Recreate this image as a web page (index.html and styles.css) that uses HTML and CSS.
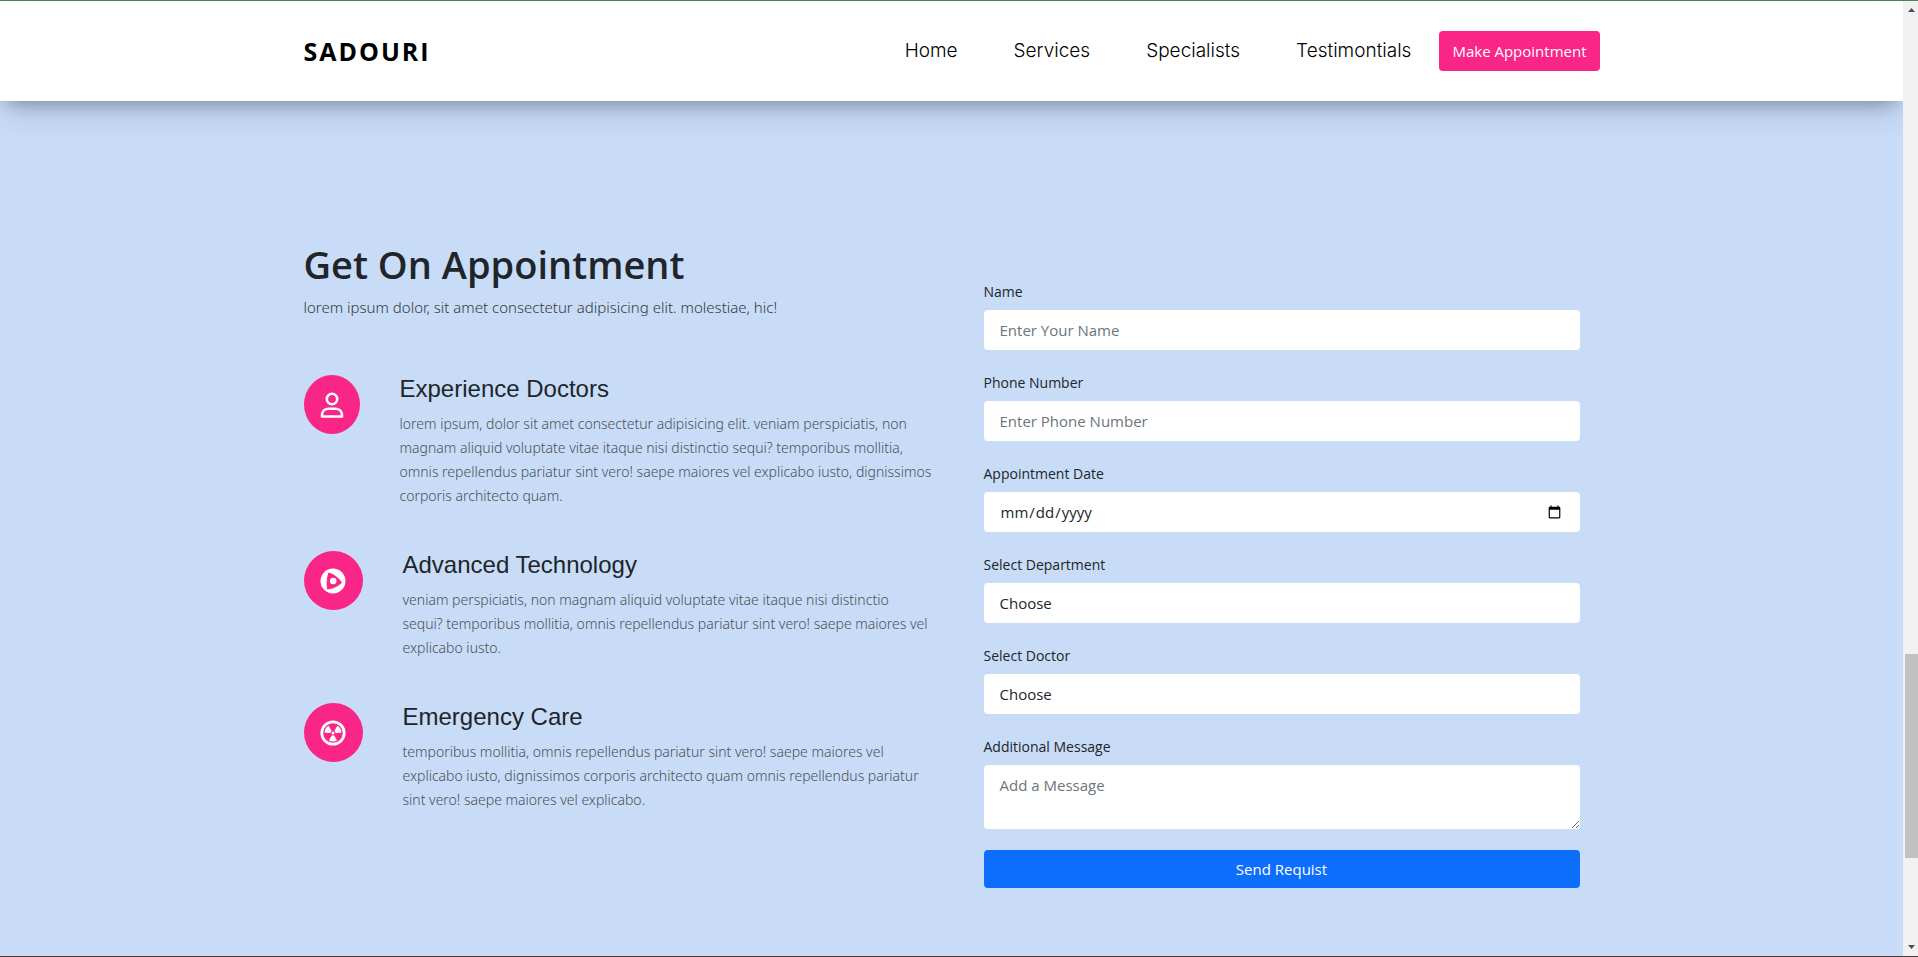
FILE: index.html
```html
<!DOCTYPE html>
<html lang="en">
<head>
<meta charset="utf-8">
<title>Sadouri</title>
<link rel="stylesheet" href="styles.css">
</head>
<body>
<div class="window">
  <div class="page">
    <header class="header">
      <div class="container header-row">
        <a class="brand" href="#">SADOURI</a>
        <nav class="nav">
          <a class="nav-link" href="#">Home</a>
          <a class="nav-link" href="#">Services</a>
          <a class="nav-link" href="#">Specialists</a>
          <a class="nav-link" href="#">Testimontials</a>
          <button class="btn-appointment" type="button">Make Appointment</button>
        </nav>
      </div>
    </header>
    <main class="container appointment">
      <section class="info">
        <h1 class="title">Get On Appointment</h1>
        <p class="subtitle">lorem ipsum dolor, sit amet consectetur adipisicing elit. molestiae, hic!</p>
        <article class="feature">
          <span class="feature-icon feature-icon-narrow">
            <svg class="icon" viewBox="0 0 26 26" fill="none" stroke="#fff" stroke-width="2.600"><circle cx="13" cy="7" r="5.200"/><path d="M3 24.500V23.200C3 19.300 6 16.800 9.600 16.800h6.800c3.600 0 6.600 2.500 6.600 6.400v1.300z" stroke-linejoin="round"/></svg>
          </span>
          <div class="feature-body">
            <h2 class="feature-title">Experience Doctors</h2>
            <p class="feature-text">lorem ipsum, dolor sit amet consectetur adipisicing elit. veniam perspiciatis, non<br>magnam aliquid voluptate vitae itaque nisi distinctio sequi? temporibus mollitia,<br>omnis repellendus pariatur sint vero! saepe maiores vel explicabo iusto, dignissimos<br>corporis architecto quam.</p>
          </div>
        </article>
        <article class="feature">
          <span class="feature-icon">
            <svg class="icon" viewBox="0 0 26 26"><circle cx="13" cy="13" r="12.500" fill="#fff"/><path d="M8.800 5C7.300 9.500 6.600 15.500 7.500 21c5.500-.7 10.500-2.800 14-6.500C18.500 10 14 6.500 8.800 5z" fill="#f92587" stroke="#f92587" stroke-width="1" stroke-linejoin="round"/><circle cx="13.200" cy="13" r="3.300" fill="#fff"/></svg>
          </span>
          <div class="feature-body">
            <h2 class="feature-title">Advanced Technology</h2>
            <p class="feature-text">veniam perspiciatis, non magnam aliquid voluptate vitae itaque nisi distinctio<br>sequi? temporibus mollitia, omnis repellendus pariatur sint vero! saepe maiores vel<br>explicabo iusto.</p>
          </div>
        </article>
        <article class="feature">
          <span class="feature-icon">
            <svg class="icon" viewBox="0 0 26 26"><circle cx="13" cy="13" r="11.200" fill="none" stroke="#fff" stroke-width="2.800"/><g fill="#fff"><circle cx="13" cy="13" r="1.500"/><path d="M11.700 15.400h2.600l2.700 5c-2.400 1.500-5.600 1.500-8 0z"/><path d="M11.700 15.400h2.600l2.700 5c-2.400 1.500-5.600 1.500-8 0z" transform="rotate(120 13 13)"/><path d="M11.700 15.400h2.600l2.700 5c-2.400 1.500-5.600 1.500-8 0z" transform="rotate(240 13 13)"/></g></svg>
          </span>
          <div class="feature-body">
            <h2 class="feature-title">Emergency Care</h2>
            <p class="feature-text">temporibus mollitia, omnis repellendus pariatur sint vero! saepe maiores vel<br>explicabo iusto, dignissimos corporis architecto quam omnis repellendus pariatur<br>sint vero! saepe maiores vel explicabo.</p>
          </div>
        </article>
      </section>
      <form class="form">
        <div class="field">
          <label class="label" for="name">Name</label>
          <input class="control" id="name" type="text" placeholder="Enter Your Name">
        </div>
        <div class="field">
          <label class="label" for="phone">Phone Number</label>
          <input class="control" id="phone" type="tel" placeholder="Enter Phone Number">
        </div>
        <div class="field">
          <label class="label" for="date">Appointment Date</label>
          <input class="control" id="date" type="date">
        </div>
        <div class="field">
          <label class="label" for="department">Select Department</label>
          <select class="control" id="department"><option>Choose</option></select>
        </div>
        <div class="field">
          <label class="label" for="doctor">Select Doctor</label>
          <select class="control" id="doctor"><option>Choose</option></select>
        </div>
        <div class="field">
          <label class="label" for="message">Additional Message</label>
          <textarea class="control control-area" id="message" placeholder="Add a Message"></textarea>
        </div>
        <button class="btn-send" type="button">Send Requist</button>
      </form>
    </main>
  </div>
  <div class="scrollbar" aria-hidden="true">
    <svg class="arrow" viewBox="0 0 7 4"><path d="M0 4h7L3.500 0z"/></svg>
    <div class="track-above"></div>
    <div class="thumb"></div>
    <div class="track-below"></div>
    <svg class="arrow" viewBox="0 0 7 4"><path d="M0 0h7L3.500 4z"/></svg>
  </div>
</div>
</body>
</html>
```
FILE: styles.css
```css
* {
  box-sizing: border-box;
}

body {
  margin: 0;
  font-family: "Open Sans", "Noto Sans", sans-serif;
  font-size: 15px;
  line-height: 24px;
  color: #212529;
}

h1, h2, p {
  margin: 0;
}

.window {
  display: flex;
  min-height: 100vh;
  border-top: 1px solid #528259;
  border-bottom: 1px solid #443c40;
}

.page {
  flex: 1;
  background: #c8dcf7;
}

.container {
  width: 100%;
  max-width: 1320px;
  margin: 0 auto;
  padding: 0 12px;
}

.header {
  background: #fff;
  padding: 30px 0;
  box-shadow: rgba(50, 50, 93, 0.25) 0 13px 27px -5px, rgba(0, 0, 0, 0.3) 0 8px 16px -8px;
}

.header-row {
  display: flex;
  align-items: center;
  justify-content: space-between;
}

.brand {
  color: #000;
  font-size: 25px;
  font-weight: 700;
  letter-spacing: 2px;
  text-decoration: none;
}

.nav {
  display: flex;
  align-items: center;
  gap: 56px;
}

.nav-link {
  color: #000;
  font-family: Inter, sans-serif;
  font-size: 19px;
  font-weight: 300;
  text-decoration: none;
}

.btn-appointment {
  height: 40px;
  margin-left: -28px;
  padding: 0 13px;
  border: 0;
  border-radius: 4px;
  background: #f92587;
  color: #fff;
  font: inherit;
}

.appointment {
  display: grid;
  grid-template-columns: 1fr 1fr;
  gap: 24px;
  padding-top: 137px;
  padding-bottom: 64px;
}

.title {
  font-size: 38px;
  font-weight: 600;
  line-height: 52px;
}

.subtitle {
  margin: 5px 0 56px;
  color: #343a40;
  font-family: "Noto Sans", sans-serif;
  font-weight: 300;
}

.feature {
  display: flex;
  gap: 40px;
  margin-bottom: 43px;
}

.feature-icon {
  display: flex;
  flex: none;
  align-items: center;
  justify-content: center;
  width: 59px;
  height: 59px;
  border-radius: 50%;
  background: #f92587;
}

.feature-icon-narrow {
  width: 56px;
}

.icon {
  width: 26px;
  height: 26px;
}

.feature-title {
  margin-bottom: 9px;
  font-family: "Liberation Sans", Arial, sans-serif;
  font-size: 24px;
  font-weight: 400;
  line-height: 28px;
}

.feature-text {
  color: #495057;
  font-family: "Noto Sans", sans-serif;
  font-size: 14px;
  font-weight: 300;
  white-space: nowrap;
}

.form {
  padding: 42px 20px 0;
}

.field {
  margin-bottom: 21px;
}

.label {
  display: block;
  margin-bottom: 6px;
  font-size: 14px;
}

.control {
  display: block;
  width: 100%;
  height: 40px;
  padding: 8px 16px;
  border: 0;
  border-radius: 4px;
  appearance: none;
  background: #fff;
  color: #212529;
  font: inherit;
}

.control::placeholder {
  color: #6c757d;
}

.control-area {
  height: 64px;
}

.btn-send {
  width: 100%;
  height: 38px;
  border: 0;
  border-radius: 4px;
  background: #0d6efd;
  color: #fff;
  font: inherit;
}

.scrollbar {
  display: flex;
  flex-direction: column;
  align-items: center;
  width: 15px;
  padding: 7px 0;
  background: #f1f1f1;
}

.arrow {
  width: 7px;
  height: 4px;
  margin-left: 2px;
  fill: #505050;
}

.track-above {
  flex: 642;
}

.thumb {
  flex: 204;
  align-self: stretch;
  margin-left: 2px;
  background: #c1c1c1;
}

.track-below {
  flex: 87;
}
```
